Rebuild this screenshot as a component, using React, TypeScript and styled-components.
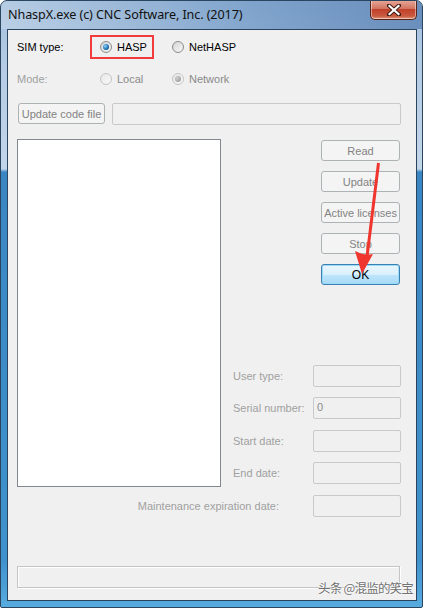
import React from "react";
import styled, { createGlobalStyle, css } from "styled-components";

const GlobalStyle = createGlobalStyle`
  html, body { margin: 0; padding: 0; width: 423px; height: 608px; overflow: hidden; background: #fff; }
  #root { width: 423px; height: 608px; }
  * { box-sizing: border-box; }
`;

const Window = styled.div`
  position: relative;
  width: 423px;
  height: 608px;
  display: flex;
  flex-direction: column;
  border: 1px solid #2a4560;
  border-radius: 7px 7px 2px 2px;
  background: linear-gradient(
    to bottom,
    #a3bfdc 0px,
    #b4cbe4 60px,
    #c2d6ea 168px,
    #3a86c3 171px,
    #3f92cd 560px,
    #58abde 100%
  );
  overflow: hidden;
`;

const TitleBar = styled.div`
  height: 28px;
  display: flex;
  align-items: flex-start;
  justify-content: space-between;
  padding-left: 7px;
  background: linear-gradient(to right, rgba(255,255,255,0.2), rgba(70,120,178,0.4) 60%, rgba(55,100,160,0.55));
`;

const Title = styled.div`
  font-family: "Noto Sans", "Open Sans", sans-serif;
  font-size: 12.6px;
  line-height: 28px;
  color: #111;
  letter-spacing: -0.1px;
`;

const CloseButton = styled.div`
  width: 47px;
  height: 20px;
  margin-right: 5px;
  margin-top: -1px;
  border: 1px solid #5a2318;
  border-top: none;
  border-radius: 0 0 5px 5px;
  background: linear-gradient(to bottom, #e9a99a 0%, #d27562 45%, #c2412a 50%, #c95a40 85%, #e0a080 100%);
  box-shadow: inset 0 0 0 1px rgba(255,255,255,0.45);
  display: flex;
  align-items: center;
  justify-content: center;
`;

const Client = styled.div`
  flex: 1;
  margin: 0 5px 6px 6px;
  border: 1px solid #2b435c;
  background: #f0f0f0;
  display: flex;
  flex-direction: column;
  padding: 0 15px 0 9px;
  font-family: "Liberation Sans", Arial, sans-serif;
  font-size: 11px;
  color: #000;
`;

const OptionRow = styled.div<{ $mt: number }>`
  display: flex;
  align-items: center;
  height: 24px;
  margin-top: ${(p) => p.$mt}px;
`;

const Label = styled.span<{ $disabled?: boolean; $width?: number }>`
  color: ${(p) => (p.$disabled ? "#a0a0a0" : "#000")};
  width: ${(p) => (p.$width ? `${p.$width}px` : "auto")};
  flex-shrink: 0;
  white-space: nowrap;
`;

const Option = styled.label<{ $width: number }>`
  position: relative;
  display: flex;
  align-items: center;
  gap: 5px;
  width: ${(p) => p.$width}px;
`;

const Highlight = styled.span`
  position: absolute;
  left: -10px;
  top: 50%;
  margin-top: -12px;
  width: 64px;
  height: 24px;
  border: 2px solid #f23b3b;
  pointer-events: none;
`;

const Radio = styled.span<{ $checked?: boolean; $disabled?: boolean }>`
  position: relative;
  width: 12px;
  height: 12px;
  border-radius: 50%;
  flex-shrink: 0;
  border: 1px solid ${(p) => (p.$disabled ? "#c4c4c4" : "#8a8c8e")};
  background: ${(p) =>
    p.$disabled
      ? "linear-gradient(135deg, #e8e8e8, #f8f8f8)"
      : "linear-gradient(135deg, #d4d4d4, #f7f7f7)"};
  ${(p) =>
    p.$checked &&
    css`
      &::after {
        content: "";
        position: absolute;
        left: 2px;
        top: 2px;
        width: 6px;
        height: 6px;
        border-radius: 50%;
        background: ${p.$disabled
          ? "radial-gradient(circle at 35% 35%, #d0d0d0, #8d8d8d)"
          : "radial-gradient(circle at 35% 35%, #8fd3ff, #1a6ead 60%, #0f4e84)"};
      }
    `}
`;

const OptionText = styled.span<{ $disabled?: boolean }>`
  color: ${(p) => (p.$disabled ? "#8a8a8a" : "#000")};
`;

const CodeRow = styled.div`
  display: flex;
  align-items: stretch;
  height: 21px;
  margin-top: 12px;
  padding-left: 1px;
  gap: 7px;
`;

const Button = styled.div<{ $default?: boolean; $width?: number }>`
  width: ${(p) => (p.$width ? `${p.$width}px` : "auto")};
  height: 21px;
  padding: 0 3px;
  flex-shrink: 0;
  display: flex;
  align-items: center;
  justify-content: center;
  border-radius: 3px;
  white-space: nowrap;
  ${(p) =>
    p.$default
      ? css`
          border: 1px solid #3c7fb1;
          background: linear-gradient(to bottom, #eaf6fd 0%, #d9f0fc 50%, #bee6fd 51%, #a7d9f5 100%);
          box-shadow: inset 0 0 0 1px #9adbf8;
          color: #000;
          font-size: 12px;
        `
      : css`
          border: 1px solid #adb2b5;
          background: #f4f4f4;
          color: #838383;
        `}
`;

const TextBox = styled.div<{ $width?: number }>`
  ${(p) => (p.$width ? `width: ${p.$width}px;` : "flex: 1;")}
  height: 22px;
  border: 1px solid #c9c9c9;
  border-radius: 2px;
  background: #f0f0f0;
  color: #8a8a8a;
  padding: 3px 3px;
  flex-shrink: 0;
`;

const Main = styled.div`
  display: flex;
  margin-top: 15px;
  height: 348px;
`;

const ListBox = styled.div`
  width: 204px;
  height: 348px;
  border: 1px solid #828790;
  background: #fff;
  flex-shrink: 0;
`;

const RightColumn = styled.div`
  flex: 1;
  display: flex;
  flex-direction: column;
  padding: 1px 0 3px 12px;
`;

const ButtonStack = styled.div`
  display: flex;
  flex-direction: column;
  gap: 10px;
  padding-left: 88px;
`;

const FieldStack = styled.div`
  margin-top: auto;
  display: flex;
  flex-direction: column;
`;

const FieldRow = styled.div<{ $mt?: number; $right?: boolean }>`
  display: flex;
  align-items: center;
  height: 22px;
  margin-top: ${(p) => p.$mt ?? 0}px;
  justify-content: ${(p) => (p.$right ? "flex-end" : "flex-start")};
  gap: ${(p) => (p.$right ? "34px" : "0")};
`;

const StatusBox = styled.div`
  height: 22px;
  margin-top: 49px;
  margin-right: 1px;
  border: 1px solid #c4c4c4;
  box-shadow: inset 1px 1px 0 #fff, 1px 1px 0 #fff;
  background: #f0f0f0;
`;

const Annotation = styled.svg`
  position: absolute;
  left: 0;
  top: 0;
  pointer-events: none;
`;

const Watermark = styled.div`
  position: absolute;
  right: 9px;
  bottom: 11px;
  font-family: "Noto Sans CJK SC", "Noto Sans", sans-serif;
  font-size: 12.5px;
  line-height: 16px;
  color: #707070;
  letter-spacing: -0.8px;
  text-shadow: 0 0 2px #fff, 0 0 2px #fff, 0 0 1px #fff;
  pointer-events: none;
`;

const fields = [
  { label: "User type:", value: "", mt: 0 },
  { label: "Serial number:", value: "0", mt: 10 },
  { label: "Start date:", value: "", mt: 11 },
  { label: "End date:", value: "", mt: 10 },
];

export default function App() {
  return (
    <>
      <GlobalStyle />
      <Window>
        <TitleBar>
          <Title>NhaspX.exe (c) CNC Software, Inc. (2017)</Title>
          <CloseButton>
            <svg width="14" height="12" viewBox="0 0 14 12">
              <path
                d="M2 1.5 L12 10.5 M12 1.5 L2 10.5"
                stroke="#3d1a12"
                strokeWidth="4"
                strokeLinecap="square"
              />
              <path
                d="M2.5 2 L11.5 10 M11.5 2 L2.5 10"
                stroke="#fff"
                strokeWidth="2.2"
                strokeLinecap="square"
              />
            </svg>
          </CloseButton>
        </TitleBar>
        <Client>
          <OptionRow $mt={5}>
            <Label $width={83}>SIM type:</Label>
            <Option $width={72}>
              <Radio $checked />
              <OptionText>HASP</OptionText>
              <Highlight />
            </Option>
            <Option $width={90}>
              <Radio />
              <OptionText>NetHASP</OptionText>
            </Option>
          </OptionRow>
          <OptionRow $mt={8}>
            <Label $disabled $width={83}>Mode:</Label>
            <Option $width={72}>
              <Radio $disabled />
              <OptionText $disabled>Local</OptionText>
            </Option>
            <Option $width={90}>
              <Radio $checked $disabled />
              <OptionText $disabled>Network</OptionText>
            </Option>
          </OptionRow>
          <CodeRow>
            <Button $width={87}>Update code file</Button>
            <TextBox />
          </CodeRow>
          <Main>
            <ListBox />
            <RightColumn>
              <ButtonStack>
                <Button $width={79}>Read</Button>
                <Button $width={79}>Update</Button>
                <Button $width={79}>Active licenses</Button>
                <Button $width={79}>Stop</Button>
                <Button $width={79} $default>OK</Button>
              </ButtonStack>
              <FieldStack>
                {fields.map((f) => (
                  <FieldRow key={f.label} $mt={f.mt}>
                    <Label $disabled $width={80}>{f.label}</Label>
                    <TextBox $width={88}>{f.value}</TextBox>
                  </FieldRow>
                ))}
              </FieldStack>
            </RightColumn>
          </Main>
          <FieldRow $mt={8} $right>
            <Label $disabled>Maintenance expiration date:</Label>
            <TextBox $width={88} />
          </FieldRow>
          <StatusBox />
        </Client>
        <Annotation width="423" height="608" viewBox="0 0 423 608">
          <path d="M377.5 162 L366 256" stroke="#f0352f" strokeWidth="3" fill="none" />
          <path d="M354 250 Q363 255 372 253 L361 273 Z" fill="#f0352f" />
        </Annotation>
        <Watermark>头条 @混监的笑宝</Watermark>
      </Window>
    </>
  );
}
